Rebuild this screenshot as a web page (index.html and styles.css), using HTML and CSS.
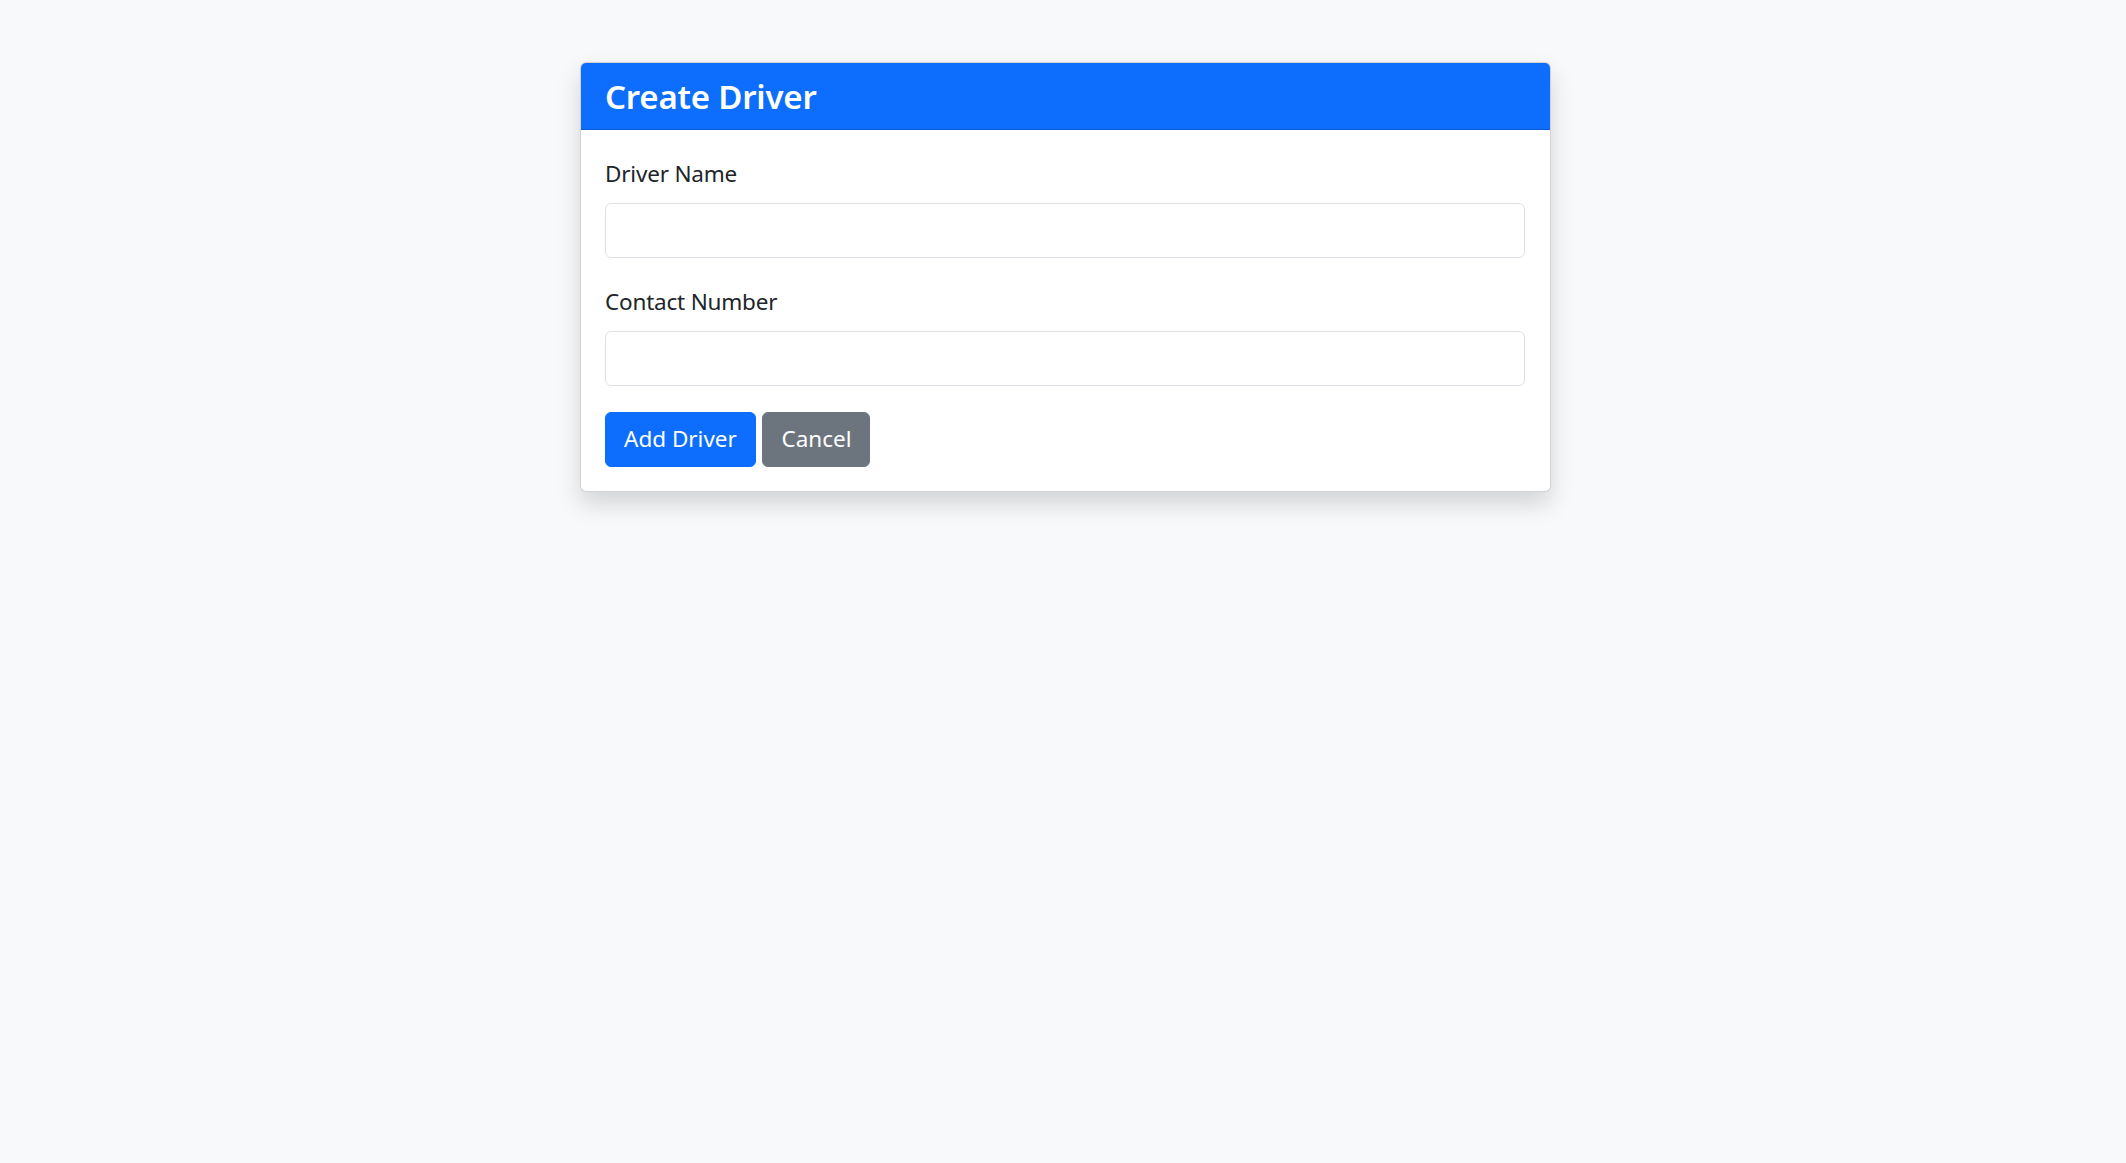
FILE: index.html
```html
<!DOCTYPE html>
<html lang="en">
<head>
<meta charset="utf-8">
<title>Create Driver</title>
<link rel="stylesheet" href="styles.css">
</head>
<body>
<main class="page">
  <section class="card">
    <header class="card-header">
      <h4 class="card-title">Create Driver</h4>
    </header>
    <form class="card-body">
      <div class="field">
        <label class="form-label" for="driverName">Driver Name</label>
        <input class="form-control" id="driverName" type="text">
      </div>
      <div class="field">
        <label class="form-label" for="contactNumber">Contact Number</label>
        <input class="form-control" id="contactNumber" type="text">
      </div>
      <div class="actions">
        <button type="submit" class="btn btn-primary">Add Driver</button>
        <button type="button" class="btn btn-secondary">Cancel</button>
      </div>
    </form>
  </section>
</main>
</body>
</html>
```

FILE: styles.css
```css
* { box-sizing: border-box; }

html, body {
  margin: 0;
  padding: 0;
}

body {
  background: #f8f9fa;
  color: #212529;
  font-family: "Noto Sans", "Open Sans", "Liberation Sans", sans-serif;
  font-size: 22.5px;
  letter-spacing: -0.2px;
  line-height: 1.5;
  min-height: 1163px;
}

.page {
  padding-top: 62px;
  padding-left: 4px;
}

.card {
  width: 971px;
  margin: 0 auto;
  background: #fff;
  border: 1px solid rgba(0, 0, 0, 0.175);
  border-radius: 6px;
  box-shadow: 0 11.6px 23.2px rgba(0, 0, 0, 0.15);
  overflow: hidden;
}

.card-header {
  background: #0d6efd;
  color: #fff;
  height: 67px;
  padding: 2px 24.5px 0;
  display: flex;
  align-items: center;
  border-bottom: 1px solid rgba(0, 0, 0, 0.175);
}

.card-title {
  margin: 0;
  font-size: 33px;
  font-weight: 600;
  letter-spacing: -0.2px;
  line-height: 1.2;
}

.card-body {
  margin: 0;
  padding: 24px 24.5px 24px;
}

.field {
  margin-bottom: 24px;
}

.field + .field {
  margin-bottom: 25.5px;
}

.form-label {
  display: block;
  padding-top: 2px;
  line-height: 35px;
  margin-bottom: 12px;
}

.form-control {
  display: block;
  width: 100%;
  height: 55px;
  padding: 0 17.4px;
  font: inherit;
  color: #212529;
  background: #fff;
  border: 1px solid #dee2e6;
  border-radius: 6px;
  outline: none;
}

.actions {
  display: flex;
  gap: 6.6px;
}

.btn {
  height: 55.5px;
  padding: 0 18px;
  font: inherit;
  color: #fff;
  border: 1px solid transparent;
  border-radius: 6px;
  cursor: pointer;
}

.btn-primary {
  background: #0d6efd;
  border-color: #0d6efd;
}

.btn-secondary {
  background: #6c757d;
  border-color: #6c757d;
}
```
